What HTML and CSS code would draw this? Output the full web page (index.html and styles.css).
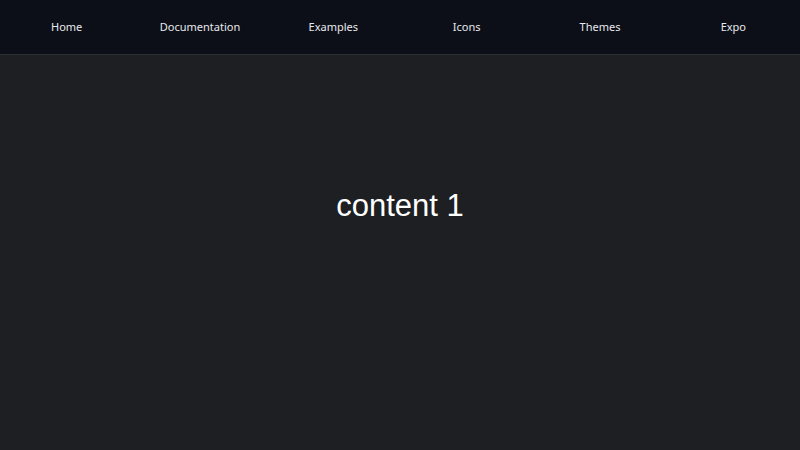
FILE: index.html
```html
<!DOCTYPE html>
<html>
<head>
<meta charset="utf-8">
<link rel="stylesheet" href="styles.css">
</head>
<body>
<nav class="nav">
  <a class="nav-item">Home</a>
  <a class="nav-item">Documentation</a>
  <a class="nav-item">Examples</a>
  <a class="nav-item">Icons</a>
  <a class="nav-item">Themes</a>
  <a class="nav-item">Expo</a>
</nav>
<main class="content">
  <div class="panel">content 1</div>
</main>
</body>
</html>
```
FILE: styles.css
```css
html, body {
  margin: 0;
  padding: 0;
  height: 100%;
  background: #1e1f23;
}
body {
  display: flex;
  flex-direction: column;
}
.nav {
  display: grid;
  grid-template-columns: repeat(6, 1fr);
  height: 54px;
  background: #0c0f18;
  border-bottom: 1px solid #2b2e35;
  align-items: center;
}
.nav-item {
  text-align: center;
  color: #e8e9ec;
  font-family: "Noto Sans", "DejaVu Sans", sans-serif;
  font-size: 11px;
  font-weight: 400;
  line-height: 14px;
  margin-top: -1px;
}
.content {
  flex: 1;
  display: flex;
  justify-content: center;
}
.panel {
  padding-top: 133px;
  color: #ffffff;
  font-family: "Liberation Sans", Arial, sans-serif;
  font-size: 31px;
  line-height: 36px;
}
```
